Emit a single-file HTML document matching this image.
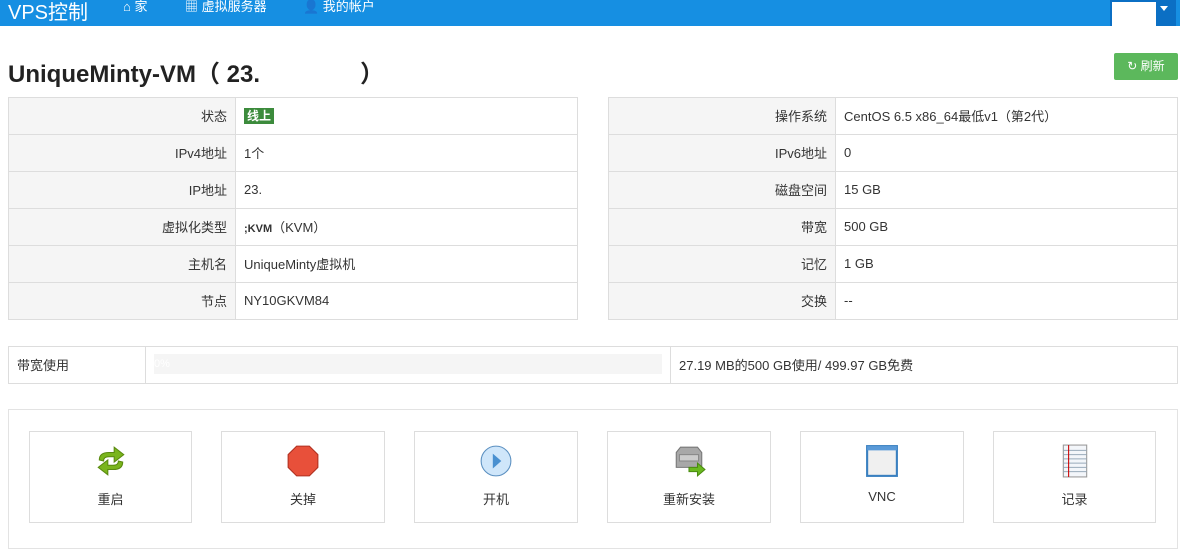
<!DOCTYPE html>
<html><head><meta charset="utf-8"><style>
*{box-sizing:border-box;margin:0;padding:0}
body{width:1180px;height:537px;overflow:hidden;background:#fff;font-family:"Liberation Sans","Noto Sans CJK SC",sans-serif;font-size:13px;color:#333;position:relative}
.nav{position:absolute;left:0;top:0;width:1180px;height:26px;background:#168fe2}
.nav .brand{position:absolute;left:8px;top:-4px;font-size:20px;color:#fff}
.nav .it{position:absolute;top:-1px;color:#fff;font-size:13px;line-height:16px}
.dd{position:absolute;left:1110px;top:0;width:66px;height:26px;background:#0b6fc4}
.dd .w{position:absolute;left:2px;top:2px;width:44px;height:26px;background:#fff}
.dd .c{position:absolute;left:50px;top:6px;border:4px solid transparent;border-top:5px solid #fff}
h1{position:absolute;left:8px;top:54px;font-size:24px;font-weight:bold;color:#222}
.btn{position:absolute;left:1114px;top:53px;width:64px;height:27px;background:#5cb85c;border-radius:2px;color:#fff;font-size:12px;line-height:27px;text-align:center}
table{position:absolute;border-collapse:collapse}
td{border:1px solid #ddd;height:37px;padding:0 8px;font-size:13px;padding-bottom:2px}
td.l{background:#f5f5f5;text-align:right}
.tag{background:#3c8b3c;color:#fff;font-size:12px;font-weight:bold;padding:1px 3px}
.panel{position:absolute;left:8px;top:409px;width:1170px;height:140px;border:1px solid #e3e3e3}
.box{position:absolute;top:431px;height:92px;border:1px solid #ddd;text-align:center;font-size:13px}
.box svg{position:absolute;left:50%;margin-left:-17px;top:12px}
.box span{position:absolute;left:0;right:0;top:57px}
</style></head><body>
<div class="nav">
<div class="brand">VPS控制</div>
<div class="it" style="left:123px">⌂ 家</div>
<div class="it" style="left:185px">▦ 虚拟服务器</div>
<div class="it" style="left:303px">👤 我的帐户</div>
<div class="dd"><div class="w"></div><div class="c"></div></div>
</div>
<h1>UniqueMinty-VM（ 23.&nbsp;&nbsp;&nbsp;&nbsp;&nbsp;&nbsp;&nbsp;&nbsp;&nbsp;&nbsp;&nbsp;&nbsp;&nbsp;&nbsp;&nbsp;）</h1>
<div class="btn">↻ 刷新</div>
<table style="left:8px;top:97px;width:570px">
<tr><td class="l" style="width:227px">状态</td><td><span class="tag">线上</span></td></tr>
<tr><td class="l">IPv4地址</td><td>1个</td></tr>
<tr><td class="l">IP地址</td><td>23.</td></tr>
<tr><td class="l">虚拟化类型</td><td><b style="font-size:11px">;KVM</b>（KVM）</td></tr>
<tr><td class="l">主机名</td><td>UniqueMinty虚拟机</td></tr>
<tr><td class="l">节点</td><td>NY10GKVM84</td></tr>
</table>
<table style="left:608px;top:97px;width:570px">
<tr><td class="l" style="width:227px">操作系统</td><td>CentOS 6.5 x86_64最低v1（第2代）</td></tr>
<tr><td class="l">IPv6地址</td><td>0</td></tr>
<tr><td class="l">磁盘空间</td><td>15 GB</td></tr>
<tr><td class="l">带宽</td><td>500 GB</td></tr>
<tr><td class="l">记忆</td><td>1 GB</td></tr>
<tr><td class="l">交换</td><td>--</td></tr>
</table>
<table style="left:8px;top:346px;width:1170px">
<tr><td style="width:137px">带宽使用</td><td style="width:525px"><div style="height:20px;background:#f5f5f5;color:#fff;font-size:11px;line-height:20px">0%</div></td><td>27.19 MB的500 GB使用/ 499.97 GB免费</td></tr>
</table>
<div class="panel"></div>
<div class="box" style="left:29px;width:163px"><svg width="34" height="34" viewBox="0 0 32 32"><path d="M5 15 Q5 8 14 8 H19 V3 L28 10 L19 17 V12 H14 Q9 12 9 16 Z" fill="#7ab51d" stroke="#5a8a10"/><path d="M27 17 Q27 24 18 24 H13 V29 L4 22 L13 15 V20 H18 Q23 20 23 16 Z" fill="#7ab51d" stroke="#5a8a10"/></svg><span>重启</span></div>
<div class="box" style="left:221px;width:164px"><svg width="34" height="34" viewBox="0 0 32 32"><polygon points="10,2 22,2 30,10 30,22 22,30 10,30 2,22 2,10" fill="#e8503a" stroke="#b03020"/></svg><span>关掉</span></div>
<div class="box" style="left:414px;width:164px"><svg width="34" height="34" viewBox="0 0 32 32"><circle cx="16" cy="16" r="14" fill="#cfe6fa" stroke="#5a8fc0"/><polygon points="13,9 21,16 13,23" fill="#4a90d0"/></svg><span>开机</span></div>
<div class="box" style="left:607px;width:164px"><svg width="34" height="34" viewBox="0 0 32 32"><path d="M4 8 L8 3 H24 L28 8 V22 H4 Z" fill="#a8a8a8" stroke="#777"/><rect x="7" y="10" width="18" height="6" fill="#ccc" stroke="#888"/><path d="M16 22 H24 V18 L31 24 L24 30 V26 H16 Z" fill="#6ab820" stroke="#4a8a10"/></svg><span>重新安装</span></div>
<div class="box" style="left:800px;width:164px"><svg width="34" height="34" viewBox="0 0 32 32"><rect x="2" y="2" width="28" height="28" fill="#f0f0f0" stroke="#3a80c0" stroke-width="2"/><rect x="2" y="2" width="28" height="4" fill="#5a9ad8"/></svg><span>VNC</span></div>
<div class="box" style="left:993px;width:163px"><svg width="34" height="34" viewBox="0 0 32 32"><rect x="5" y="1" width="22" height="30" fill="#f3f6fa" stroke="#999"/><path d="M5 6H27M5 10H27M5 14H27M5 18H27M5 22H27M5 26H27" stroke="#9ab" stroke-width="1"/><path d="M10 1V31" stroke="#c00"/></svg><span>记录</span></div>
</body></html>
